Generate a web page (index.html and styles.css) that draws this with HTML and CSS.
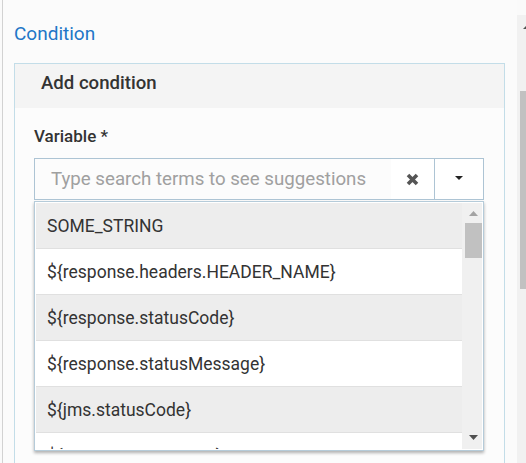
FILE: index.html
```html
<!DOCTYPE html>
<html lang="en">
<head>
<meta charset="utf-8">
<title>Condition</title>
<link rel="stylesheet" href="styles.css">
</head>
<body>
<div class="page">
  <div class="main">
    <h2 class="section-title">Condition</h2>
    <section class="card">
      <header class="card-header">Add condition</header>
      <div class="card-body">
        <label class="field-label">Variable *</label>
        <div class="combo">
          <div class="combo-box">
            <span class="combo-placeholder">Type search terms to see suggestions</span>
            <button class="combo-clear" type="button" aria-label="Clear">
              <svg width="13" height="13" viewBox="0 0 13 13"><path d="M2 2 L11 11 M11 2 L2 11" stroke="#555" stroke-width="3.6" fill="none"/></svg>
            </button>
            <button class="combo-toggle" type="button" aria-label="Toggle">
              <svg width="8" height="4" viewBox="0 0 8 4"><polygon points="0,0 8,0 4,4" fill="#222"/></svg>
            </button>
          </div>
          <div class="dropdown">
            <ul class="dropdown-list">
              <li class="option alt">SOME_STRING</li>
              <li class="option">${response.headers.HEADER_NAME}</li>
              <li class="option alt">${response.statusCode}</li>
              <li class="option">${response.statusMessage}</li>
              <li class="option alt">${jms.statusCode}</li>
              <li class="option">${jms.statusMessage}</li>
            </ul>
            <div class="dd-scroll">
              <svg class="dd-arrow-up" width="9" height="5" viewBox="0 0 9 5"><polygon points="0,5 9,5 4.5,0" fill="#a3a3a3"/></svg>
              <div class="dd-thumb"></div>
              <svg class="dd-arrow-down" width="9" height="5" viewBox="0 0 9 5"><polygon points="0,0 9,0 4.5,5" fill="#505050"/></svg>
            </div>
          </div>
        </div>
      </div>
    </section>
  </div>
  <div class="page-scroll">
    <svg class="ps-arrow" width="8" height="4" viewBox="0 0 8 4"><polygon points="0,4 8,4 4,0" fill="#505050"/></svg>
    <div class="ps-thumb"></div>
  </div>
</div>
</body>
</html>
```
FILE: styles.css
```css
* { box-sizing: border-box; }
html, body { margin: 0; height: 100%; overflow: hidden; }
body {
  background: #fafafa;
  font-family: Roboto, "Liberation Sans", sans-serif;
  color: #333;
}
.page {
  display: flex;
  width: 526px;
  height: 463px;
  overflow: hidden;
}
.main {
  flex: none;
  width: 515px;
  margin-left: 2px;
  border-left: 1px solid #d2d2d2;
  padding: 23px 12px 0 11px;
  background: #fbfbfb;
}
.section-title {
  margin: 0 0 18px;
  font-size: 19px;
  font-weight: 400;
  line-height: 22px;
  color: #2176c7;
}
.card {
  border: 1px solid #c3dde8;
  height: 430px;
  background: #fcfcfc;
}
.card-header {
  background: #f4f4f4;
  padding: 8px 20px 14px 26px;
  font-size: 18.6px;
  font-weight: 500;
  line-height: 22px;
  color: #333;
}
.card-body {
  padding: 18px 20px 0 19px;
}
.field-label {
  display: block;
  font-size: 17px;
  font-weight: 500;
  line-height: 20px;
  margin-bottom: 12px;
  color: #333;
}
.combo { position: relative; }
.combo-box {
  display: flex;
  height: 42px;
  border: 1px solid #adc4d4;
  background: #fff;
}
.combo-placeholder {
  flex: 1;
  padding-left: 16px;
  font-size: 18.7px;
  line-height: 40px;
  color: #a0a0a0;
  background: #fcfcfc;
  white-space: nowrap;
  overflow: hidden;
}
.combo-clear, .combo-toggle {
  border: 0;
  padding: 0;
  margin: 0;
  background: #fff;
  display: flex;
  align-items: center;
  justify-content: center;
}
.combo-clear { width: 43px; }
.combo-toggle {
  width: 49px;
  border-left: 1px solid #adc4d4;
  padding-bottom: 2px;
}
.dropdown {
  position: absolute;
  left: 0;
  right: 0;
  top: calc(100% + 1px);
  height: 250px;
  border: 1px solid #b5cbd9;
  padding: 1px;
  background: #fff;
  display: flex;
  box-shadow: 0 2px 3px rgba(0, 0, 0, 0.3);
  overflow: hidden;
}
.dropdown-list {
  flex: 1;
  list-style: none;
  margin: 0;
  padding: 0;
  overflow: hidden;
}
.option {
  height: 46px;
  border-bottom: 1px solid #e0e0e0;
  padding: 2px 0 0 11px;
  font-size: 17.5px;
  line-height: 43px;
  white-space: nowrap;
  color: #333;
  background: #fff;
}
.option.alt { background: #ededed; }
.dd-scroll {
  width: 20px;
  flex: none;
  background: #f0f0f0;
  padding-left: 3px;
  display: flex;
  flex-direction: column;
  align-items: center;
}
.dd-arrow-up { margin-top: 8px; flex: none; }
.dd-thumb {
  width: 17px;
  height: 35px;
  margin-top: 7px;
  background: #c1c1c1;
  flex: none;
}
.dd-arrow-down { margin-top: auto; margin-bottom: 9px; flex: none; }
.page-scroll {
  flex: none;
  width: 17px;
  margin-top: 15px;
  background: #f1f1f1;
  padding-left: 2px;
  display: flex;
  flex-direction: column;
  align-items: center;
}
.ps-arrow { margin-top: 10px; flex: none; }
.ps-thumb {
  width: 13px;
  height: 198px;
  margin-top: 62px;
  background: #c1c1c1;
  flex: none;
}
```
